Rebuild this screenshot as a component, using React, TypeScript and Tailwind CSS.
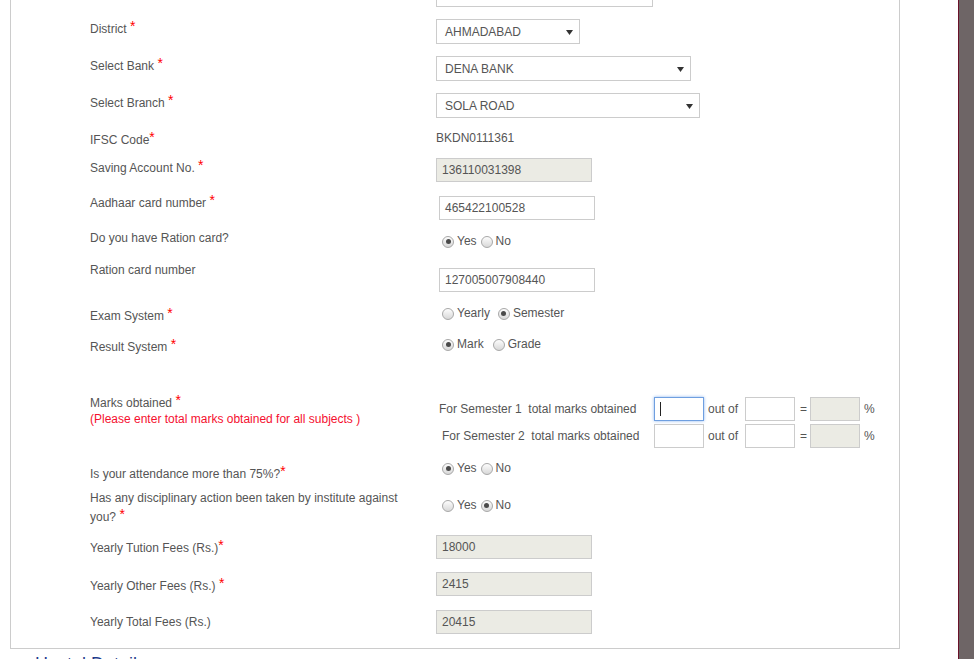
import type { ReactNode } from 'react';

const FONT = "font-['Liberation_Sans',Arial,sans-serif]";

function Star({ space = true }: { space?: boolean }) {
  return (
    <>
      {space ? ' ' : ''}
      <span className="relative -top-[2px] text-[14px] text-[#ff0000]">*</span>
    </>
  );
}

function Row({
  h,
  lt = '',
  ct = '',
  label,
  children,
}: {
  h: string;
  lt?: string;
  ct?: string;
  label?: ReactNode;
  children?: ReactNode;
}) {
  return (
    <div className={`flex ${h}`}>
      <div className={`w-[346px] shrink-0 ${lt}`}>
        <div className="w-[330px]">{label}</div>
      </div>
      <div className={ct}>{children}</div>
    </div>
  );
}

function Select({ w, value }: { w: string; value: string }) {
  return (
    <div className={`flex h-[25px] items-center justify-between border border-[#ccc] bg-white pl-[8px] pr-[6px] pt-[2px] ${w}`}>
      <span>{value}</span>
      <svg width="7" height="5" viewBox="0 0 7 5">
        <polygon points="0,0 7,0 3.5,5" fill="#333" />
      </svg>
    </div>
  );
}

function Input({ w, value = '', ro = false, extra = '' }: { w: string; value?: string; ro?: boolean; extra?: string }) {
  return (
    <div
      className={`flex h-[24px] items-center border border-[#ccc] pl-[5px] ${ro ? 'bg-[#ebebe4]' : 'bg-white'} ${w} ${extra}`}
    >
      {value}
    </div>
  );
}

function Radio({ checked = false }: { checked?: boolean }) {
  return (
    <span className="flex h-[12px] w-[12px] shrink-0 items-center justify-center rounded-full border border-[#a8a8a8] bg-linear-to-b from-[#fdfdfd] to-[#d8d8d8]">
      {checked && <span className="h-[5px] w-[5px] rounded-full bg-[#4a4a4a]" />}
    </span>
  );
}

function Option({ label, checked, ml }: { label: string; checked?: boolean; ml: string }) {
  return (
    <span className={`flex items-center ${ml}`}>
      <Radio checked={checked} />
      <span className="ml-[3px]">{label}</span>
    </span>
  );
}

function MarksLine({ text, pl, focused = false }: { text: string; pl: string; focused?: boolean }) {
  return (
    <div className="flex h-[24px] items-center">
      <div className={`w-[218px] shrink-0 whitespace-pre ${pl}`}>{text}</div>
      {focused ? (
        <div className="flex h-[24px] w-[50px] items-center border border-[#6f9fe0] bg-white pl-[5px] shadow-[0_0_3px_#8cb6f0]">
          <span className="h-[14px] w-px bg-[#222]" />
        </div>
      ) : (
        <Input w="w-[50px]" />
      )}
      <span className="ml-[4px] w-[37px]">out of</span>
      <Input w="w-[50px]" />
      <span className="ml-[5px] w-[10px]">=</span>
      <Input w="w-[50px]" ro />
      <span className="ml-[4px]">%</span>
    </div>
  );
}

export default function App() {
  return (
    <div className={`flex h-[659px] w-[974px] overflow-hidden bg-white text-[12px] leading-[17px] text-[#555] ${FONT}`}>
      <div className="w-[958px] shrink-0">
        <div className="ml-[10px] w-[890px] border-x border-b border-[#ccc]">
          <div className="-mt-[17px] pl-[79px]">
            <Row h="h-[36px]">
              <Input w="w-[217px]" />
            </Row>
            <Row h="h-[37px]" lt="mt-[1px]" label={<>District<Star /></>}>
              <Select w="w-[144px]" value="AHMADABAD" />
            </Row>
            <Row h="h-[37px]" lt="mt-[1px]" label={<>Select Bank<Star /></>}>
              <Select w="w-[255px]" value="DENA BANK" />
            </Row>
            <Row h="h-[36px]" lt="mt-[1px]" label={<>Select Branch<Star /></>}>
              <Select w="w-[264px]" value="SOLA ROAD" />
            </Row>
            <Row h="h-[29px]" lt="mt-[2px]" ct="mt-[1px]" label={<>IFSC Code<Star space={false} /></>}>
              BKDN0111361
            </Row>
            <Row h="h-[35px]" lt="mt-[1px]" label={<>Saving Account No.<Star /></>}>
              <Input w="w-[156px]" value="136110031398" ro />
            </Row>
            <Row h="h-[36px]" lt="mt-[1px]" ct="mt-[3px]" label={<>Aadhaar card number<Star /></>}>
              <Input w="w-[156px]" value="465422100528" extra="ml-[3px]" />
            </Row>
            <Row h="h-[31px]" lt="mt-[1px]" ct="mt-[4px]" label="Do you have Ration card?">
              <div className="flex">
                <Option label="Yes" checked ml="ml-[6px]" />
                <Option label="No" ml="ml-[4px]" />
              </div>
            </Row>
            <Row h="h-[44px]" lt="mt-[2px]" ct="mt-[8px]" label="Ration card number">
              <Input w="w-[156px]" value="127005007908440" extra="ml-[3px]" />
            </Row>
            <Row h="h-[31px]" lt="mt-[3px]" ct="mt-[1px]" label={<>Exam System<Star /></>}>
              <div className="flex">
                <Option label="Yearly" ml="ml-[6px]" />
                <Option label="Semester" checked ml="ml-[8px]" />
              </div>
            </Row>
            <Row h="h-[59px]" lt="mt-[3px]" ct="mt-[1px]" label={<>Result System<Star /></>}>
              <div className="flex">
                <Option label="Mark" checked ml="ml-[6px]" />
                <Option label="Grade" ml="ml-[9px]" />
              </div>
            </Row>
            <Row
              h="h-[66px]"
              ct="mt-[3px]"
              label={
                <div className="leading-[16px]">
                  <div>
                    Marks obtained<Star />
                  </div>
                  <div className="text-[#f5102f]">(Please enter total marks obtained for all subjects )</div>
                </div>
              }
            >
              <div className="flex flex-col gap-[3px]">
                <MarksLine text="For Semester 1  total marks obtained" pl="pl-[3px]" focused />
                <MarksLine text="For Semester 2  total marks obtained" pl="pl-[6px]" />
              </div>
            </Row>
            <Row h="h-[28px]" lt="mt-[5px]" label={<>Is your attendance more than 75%?<Star space={false} /></>}>
              <div className="flex">
                <Option label="Yes" checked ml="ml-[6px]" />
                <Option label="No" ml="ml-[4px]" />
              </div>
            </Row>
            <Row
              h="h-[47px]"
              lt="mt-[1px]"
              ct="mt-[9px]"
              label={
                <div className="leading-[18px]">
                  Has any disciplinary action been taken by institute against you?<Star />
                </div>
              }
            >
              <div className="flex">
                <Option label="Yes" ml="ml-[6px]" />
                <Option label="No" checked ml="ml-[4px]" />
              </div>
            </Row>
            <Row h="h-[37px]" lt="mt-[4px]" label={<>Yearly Tution Fees (Rs.)<Star space={false} /></>}>
              <Input w="w-[156px]" value="18000" ro />
            </Row>
            <Row h="h-[38px]" lt="mt-[5px]" label={<>Yearly Other Fees (Rs.)<Star /></>}>
              <Input w="w-[156px]" value="2415" ro />
            </Row>
            <Row h="h-[38px]" lt="mt-[4px]" label="Yearly Total Fees (Rs.)">
              <Input w="w-[156px]" value="20415" ro />
            </Row>
          </div>
        </div>
        <h3 className="ml-[35px] mt-[5px] text-[18px] leading-[20px] text-[#1f3c8c]">Hostel Details</h3>
      </div>
      <div className="w-[16px] shrink-0 border-l border-[#6a1028] bg-[#6e6566]" />
    </div>
  );
}
